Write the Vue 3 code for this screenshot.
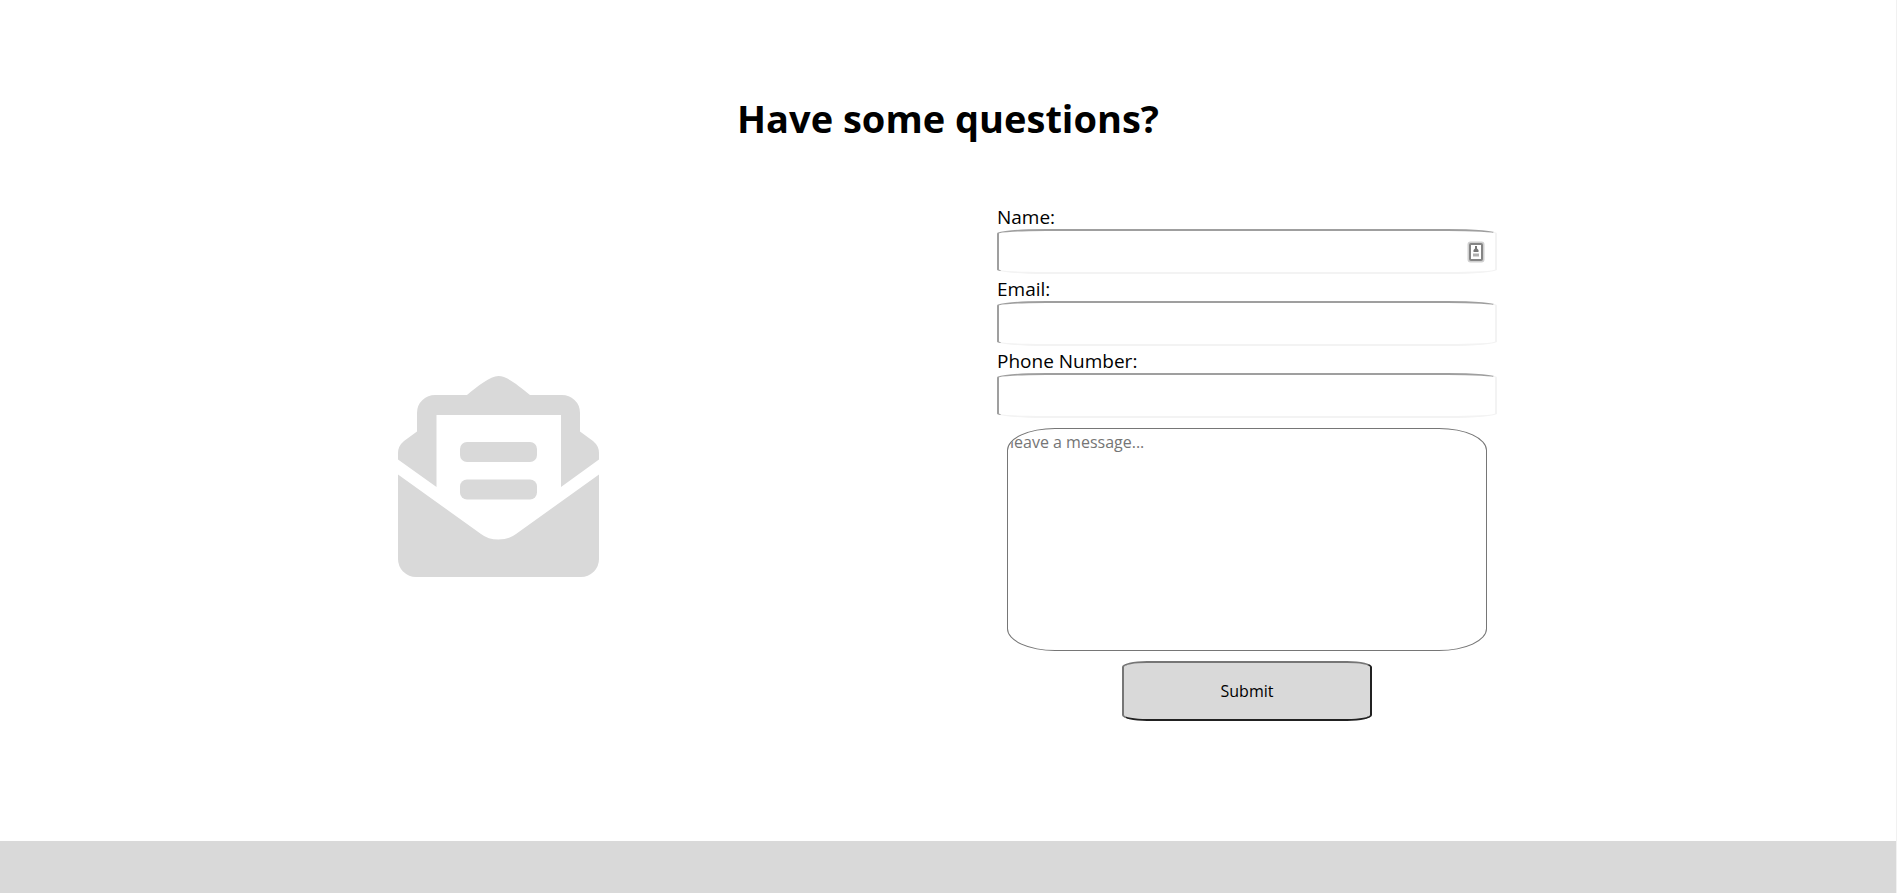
<script setup>
import { ref } from 'vue'

const fields = [
  { id: 'name', label: 'Name:', type: 'text', card: true },
  { id: 'email', label: 'Email:', type: 'email', card: false },
  { id: 'phone', label: 'Phone Number:', type: 'tel', card: false }
]
const values = ref({ name: '', email: '', phone: '' })
const message = ref('')
</script>

<template>
  <div class="page">
    <main class="contact">
      <h1>Have some questions?</h1>
      <div class="row">
        <svg class="envelope" viewBox="0 0 201 201" aria-hidden="true">
          <path d="M0 83.500V77Q0 70 6 65L19 55.500V37Q19 29 24.500 24Q30 19 37 19H69C80 10 92 0 100.500 0C109 0 121 10 132 19H164Q171 19 176.500 24Q182 29 182 37V55.500L195 65Q201 70 201 77V83.500L163 111V39H38.500V111Z" />
          <path d="M0 98.500L83 158Q90 163.500 100.500 163.500Q111 163.500 118 158L201 98.500V183Q201 190 196 195.500Q190 201 183 201H18Q11 201 5 195.500Q0 190 0 183Z" />
          <rect x="62" y="66" width="77" height="20" rx="7" />
          <rect x="62" y="103.500" width="77" height="20" rx="7" />
        </svg>
        <form @submit.prevent>
          <div v-for="f in fields" :key="f.id" class="field">
            <label :for="f.id">{{ f.label }}</label>
            <div class="control">
              <input :id="f.id" v-model="values[f.id]" :type="f.type" />
              <svg v-if="f.card" class="card" viewBox="0 0 18 22" aria-hidden="true">
                <rect x="2.500" y="2.500" width="13" height="17" rx="1" fill="none" stroke="#d0d0d0" stroke-width="4" />
                <rect x="3" y="3" width="12" height="16" rx="1" fill="#fff" stroke="#858585" stroke-width="2" />
                <path d="M8 5h2v2.500l1.500 1.500v2h-5v-2l1.500-1.500z" fill="#777" />
                <path d="M6 12.500h6v3h-6z" fill="#b0b0b0" />
              </svg>
            </div>
          </div>
          <textarea v-model="message" aria-label="Message" placeholder="leave a message..."></textarea>
          <button type="submit">Submit</button>
        </form>
      </div>
    </main>
    <footer></footer>
  </div>
</template>

<style>
body {
  margin: 0;
  background: #fff;
}
</style>

<style scoped>
.page {
  box-sizing: border-box;
  min-height: 100vh;
  display: flex;
  flex-direction: column;
  border-right: 1px solid #f1f1f1;
  font-family: "Segoe UI", "Open Sans", "Noto Sans", sans-serif;
  color: #000;
}
.contact {
  padding: 90px 0;
}
h1 {
  margin: 0 0 56px;
  font-size: 38px;
  line-height: 56px;
  font-weight: 700;
  text-align: center;
}
.row {
  display: flex;
  justify-content: space-evenly;
  align-items: center;
  padding-right: 1px;
}
.envelope {
  width: 201px;
  height: 201px;
  fill: #d9d9d9;
}
form {
  width: 500px;
  display: flex;
  flex-direction: column;
  padding-bottom: 30px;
}
label {
  display: block;
  padding-top: 4px;
  font-size: 19px;
  line-height: 23px;
}
.control {
  position: relative;
}
input,
textarea,
button {
  display: block;
  box-sizing: border-box;
  font-family: inherit;
  font-size: 16px;
  border-radius: 10%;
  outline: none;
}
input {
  width: 100%;
  height: 45px;
  padding: 2px 40px 2px 10px;
  background: #fff;
  border: 2px solid;
  border-color: #9f9f9f #f3f3f3 #f3f3f3 #9f9f9f;
}
.card {
  position: absolute;
  right: 12px;
  top: 12px;
  width: 18px;
  height: 22px;
}
textarea {
  height: 223px;
  margin: 10px;
  padding: 2px;
  background: #fff;
  border: 1px solid #767676;
  resize: none;
  line-height: 22px;
}
textarea::placeholder {
  color: #757575;
  opacity: 1;
}
button {
  align-self: center;
  width: 250px;
  height: 60px;
  background: #d9d9d9;
  color: #000;
  border: 2px solid;
  border-color: #767676 #212121 #212121 #767676;
}
footer {
  flex: 1;
  min-height: 52px;
  background: #d9d9d9;
}
</style>
